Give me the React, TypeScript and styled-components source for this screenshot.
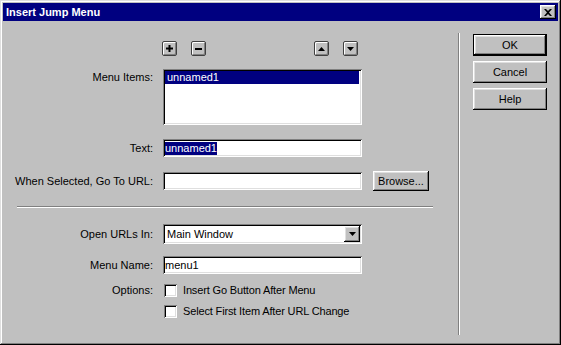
import { createGlobalStyle, styled } from 'styled-components';

const GlobalStyle = createGlobalStyle`
  html, body {
    margin: 0;
    padding: 0;
  }
  body {
    width: 561px;
    height: 345px;
    overflow: hidden;
    background: #c0c0c0;
    font-family: "Liberation Sans", Arial, sans-serif;
    font-size: 11px;
    color: #000;
  }
`;

const raised = `
  box-shadow: inset -1px -1px #000, inset 1px 1px #fff, inset -2px -2px #808080, inset 2px 2px #dfdfdf;
`;

const sunken = `
  box-shadow: inset 1px 1px #808080, inset -1px -1px #fff, inset 2px 2px #000, inset -2px -2px #dfdfdf;
`;

const Window = styled.div`
  box-sizing: border-box;
  width: 561px;
  height: 345px;
  padding: 3px;
  background: #c0c0c0;
  box-shadow: inset -1px -1px #000, inset 1px 1px #dfdfdf, inset -2px -2px #808080, inset 2px 2px #fff;
  display: flex;
  flex-direction: column;
`;

const TitleBar = styled.div`
  height: 18px;
  background: #000080;
  display: flex;
  align-items: center;
  justify-content: space-between;
  padding: 0 2px 0 3px;
`;

const TitleText = styled.span`
  color: #fff;
  font-weight: bold;
  font-size: 11px;
`;

const CloseButton = styled.div`
  width: 16px;
  height: 14px;
  background: #c0c0c0;
  ${raised}
  display: flex;
  align-items: center;
  justify-content: center;
`;

const Body = styled.div`
  flex: 1;
  display: flex;
`;

const FormPanel = styled.div`
  box-sizing: border-box;
  width: 455px;
  padding-top: 20px;
`;

const VDivider = styled.div`
  box-sizing: border-box;
  width: 2px;
  margin: 12px 0 7px;
  border-left: 1px solid #808080;
  border-right: 1px solid #fff;
`;

const ButtonColumn = styled.div`
  display: flex;
  flex-direction: column;
  gap: 5px;
  padding: 13px 0 0 13px;
`;

const PushButton = styled.button<{ $default?: boolean; $width?: number; $height?: number }>`
  box-sizing: border-box;
  width: ${({ $width }) => $width ?? 74}px;
  height: ${({ $height }) => $height ?? 22}px;
  padding: 0;
  font-family: inherit;
  font-size: 11px;
  color: #000;
  background: #c0c0c0;
  border: ${({ $default }) => ($default ? '1px solid #000' : 'none')};
  ${raised}
  display: flex;
  align-items: center;
  justify-content: center;
`;

const BrowseButton = styled(PushButton)`
  margin-left: 1px;
`;

const Row = styled.div<{ $mt: number; $align?: string }>`
  display: grid;
  grid-template-columns: 150px 199px auto;
  column-gap: 10px;
  align-items: ${({ $align }) => $align ?? 'center'};
  margin-top: ${({ $mt }) => $mt}px;
`;

const Label = styled.div<{ $pt?: number }>`
  text-align: right;
  white-space: nowrap;
  line-height: 13px;
  padding-top: ${({ $pt }) => $pt ?? 0}px;
`;

const IconBar = styled.div`
  display: flex;
  justify-content: space-between;
  margin-left: -1px;
  padding-right: 4px;
`;

const IconGroup = styled.div`
  display: flex;
  gap: 14px;
`;

const IconButton = styled.div`
  box-sizing: border-box;
  width: 15px;
  height: 15px;
  border-radius: 2px;
  background: #c0c0c0;
  border: 1px solid #404040;
  box-shadow: inset 1px 1px #fff, inset -1px -1px #808080;
  display: flex;
  align-items: center;
  justify-content: center;
`;

const ListBox = styled.div`
  box-sizing: border-box;
  height: 56px;
  background: #fff;
  ${sunken}
  padding: 2px 3px 2px 2px;
`;

const ListItem = styled.div<{ $selected?: boolean }>`
  height: 13px;
  line-height: 13px;
  padding-left: 2px;
  color: ${({ $selected }) => ($selected ? '#fff' : '#000')};
  background: ${({ $selected }) => ($selected ? '#000080' : 'transparent')};
`;

const TextField = styled.div`
  box-sizing: border-box;
  height: 18px;
  background: #fff;
  ${sunken}
  padding: 0 2px;
  display: flex;
  align-items: center;
  line-height: 13px;
  white-space: nowrap;
`;

const Highlight = styled.span`
  background: #000080;
  color: #fff;
`;

const SelectBox = styled.div`
  box-sizing: border-box;
  height: 20px;
  background: #fff;
  ${sunken}
  padding: 2px;
  display: flex;
  align-items: center;
`;

const SelectValue = styled.span`
  flex: 1;
  padding-left: 2px;
  line-height: 13px;
`;

const DropButton = styled.div`
  box-sizing: border-box;
  width: 16px;
  height: 16px;
  background: #c0c0c0;
  ${raised}
  display: flex;
  align-items: center;
  justify-content: center;
`;

const Separator = styled.div`
  box-sizing: border-box;
  width: 416px;
  height: 2px;
  margin: 15px 0 0 14px;
  border-top: 1px solid #808080;
  border-bottom: 1px solid #fff;
`;

const CheckLine = styled.div`
  display: flex;
  align-items: center;
  gap: 6px;
  white-space: nowrap;
  margin-left: 1px;
`;

const CheckBox = styled.div`
  box-sizing: border-box;
  width: 13px;
  height: 13px;
  background: #fff;
  ${sunken}
`;

const CheckText = styled.span`
  line-height: 13px;
  letter-spacing: -0.15px;
`;

const Triangle = ({ dir, w = 7 }: { dir: 'up' | 'down'; w?: number }) => {
  const h = Math.ceil(w / 2);
  const points = dir === 'up' ? `0,${h} ${w},${h} ${w / 2},0` : `0,0 ${w},0 ${w / 2},${h}`;
  return (
    <svg width={w} height={h} viewBox={`0 0 ${w} ${h}`}>
      <polygon points={points} fill="#000" />
    </svg>
  );
};

const App = () => {
  return (
    <>
      <GlobalStyle />
      <Window>
        <TitleBar>
          <TitleText>Insert Jump Menu</TitleText>
          <CloseButton>
            <svg width="8" height="7" viewBox="0 0 8 7">
              <path d="M0 0 L2 0 L4 2 L6 0 L8 0 L5 3.5 L8 7 L6 7 L4 5 L2 7 L0 7 L3 3.5 Z" fill="#000" />
            </svg>
          </CloseButton>
        </TitleBar>
        <Body>
          <FormPanel>
            <Row $mt={0}>
              <div />
              <IconBar>
                <IconGroup>
                  <IconButton>
                    <svg width="7" height="7" viewBox="0 0 7 7">
                      <path d="M2.5 0 H4.5 V2.5 H7 V4.5 H4.5 V7 H2.5 V4.5 H0 V2.5 H2.5 Z" fill="#000" />
                    </svg>
                  </IconButton>
                  <IconButton>
                    <svg width="7" height="2" viewBox="0 0 7 2">
                      <rect width="7" height="2" fill="#000" />
                    </svg>
                  </IconButton>
                </IconGroup>
                <IconGroup>
                  <IconButton>
                    <Triangle dir="up" />
                  </IconButton>
                  <IconButton>
                    <Triangle dir="down" />
                  </IconButton>
                </IconGroup>
              </IconBar>
            </Row>

            <Row $mt={13} $align="start">
              <Label $pt={2}>Menu Items:</Label>
              <ListBox>
                <ListItem $selected>unnamed1</ListItem>
              </ListBox>
            </Row>

            <Row $mt={14}>
              <Label>Text:</Label>
              <TextField>
                <Highlight>unnamed1</Highlight>
              </TextField>
            </Row>

            <Row $mt={14}>
              <Label>When Selected, Go To URL:</Label>
              <TextField />
              <BrowseButton $width={56} $height={20}>
                Browse...
              </BrowseButton>
            </Row>

            <Separator />

            <Row $mt={16}>
              <Label>Open URLs In:</Label>
              <SelectBox>
                <SelectValue>Main Window</SelectValue>
                <DropButton>
                  <Triangle dir="down" />
                </DropButton>
              </SelectBox>
            </Row>

            <Row $mt={12}>
              <Label>Menu Name:</Label>
              <TextField>menu1</TextField>
            </Row>

            <Row $mt={10}>
              <Label>Options:</Label>
              <CheckLine>
                <CheckBox />
                <CheckText>Insert Go Button After Menu</CheckText>
              </CheckLine>
            </Row>

            <Row $mt={8}>
              <div />
              <CheckLine>
                <CheckBox />
                <CheckText>Select First Item After URL Change</CheckText>
              </CheckLine>
            </Row>
          </FormPanel>
          <VDivider />
          <ButtonColumn>
            <PushButton $default>OK</PushButton>
            <PushButton>Cancel</PushButton>
            <PushButton>Help</PushButton>
          </ButtonColumn>
        </Body>
      </Window>
    </>
  );
};

export default App;
